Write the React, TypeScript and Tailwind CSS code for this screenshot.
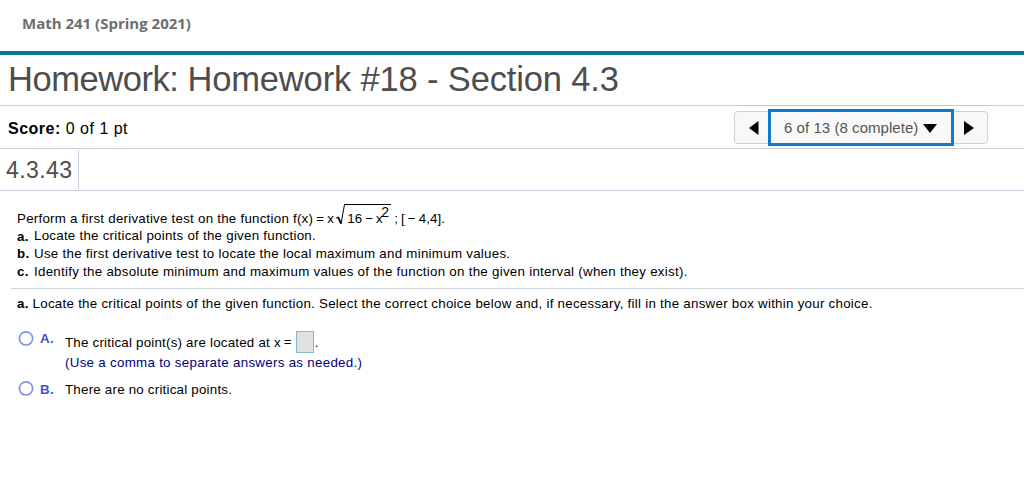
const SquareRoot = () => {
  return (
    <span className="relative ml-px h-6 w-[59px] shrink-0 -translate-y-[3px]">
      <svg
        className="absolute top-0 left-0"
        width="57"
        height="24"
        viewBox="0 0 57 24"
        fill="none"
      >
        <path d="M1 14.5 L3 13" stroke="black" strokeWidth="1" />
        <path d="M3 13 L6 19.5" stroke="black" strokeWidth="1.8" />
        <path d="M6 20 L9.5 0.5 H56" stroke="black" strokeWidth="1" />
      </svg>
      <span className="absolute top-[6px] left-[12px] flex gap-[3px] leading-[18px] tracking-[0.1px]">
        <span>16</span>
        <span>−</span>
        <span>x</span>
      </span>
      <span className="absolute -top-px left-[46px] text-[14px] leading-[18px]">2</span>
    </span>
  );
};

const Radio = () => {
  return (
    <svg width="16" height="16" viewBox="0 0 16 16" className="shrink-0">
      <circle cx="8" cy="8.4" r="6.6" fill="white" stroke="#8093e0" strokeWidth="1.7" />
    </svg>
  );
};

const Header = () => {
  return (
    <header>
      <div className="flex h-[51px] items-start pt-[13px] pl-[22px] font-['Open_Sans',sans-serif] text-[15px] leading-5 font-bold text-[#6a7070]">
        <span>Math 241 (Spring 2021)</span>
      </div>
      <div className="h-1 bg-[#007a9c]" />
      <h1 className="flex h-[51px] items-center gap-[9px] border-b border-[#c8ccd9] pl-2 text-[34.5px] text-[#4d4d4d]">
        <span className="tracking-[-0.45px]">Homework:</span>
        <span className="tracking-[-0.15px]">Homework #18 - Section 4.3</span>
      </h1>
    </header>
  );
};

const Pager = () => {
  return (
    <div className="flex h-[33px] w-[254px] rounded-[4px] border border-[#cfcfcf] bg-[#f8f8f8]">
      <button className="flex w-[33px] items-center justify-end pt-[2px] pr-[9px]">
        <svg width="10" height="14" viewBox="0 0 10 14">
          <path d="M0 7 L9.5 0 V14 Z" />
        </svg>
      </button>
      <button className="-my-[3px] flex w-[186px] items-center border-[3px] border-[#0d7acc] pl-[13px] text-[15px] tracking-[0.05px] text-[#555]">
        <span className="pt-[2px] whitespace-nowrap">6 of 13 (8 complete)</span>
        <svg className="mt-[2px] ml-[5px]" width="14" height="9" viewBox="0 0 14 9">
          <path d="M0 0 H14 L7 9 Z" fill="black" />
        </svg>
      </button>
      <button className="flex flex-1 items-center pt-[2px] pl-[10px]">
        <svg width="10" height="14" viewBox="0 0 10 14">
          <path d="M0 0 L10 7 L0 14 Z" />
        </svg>
      </button>
    </div>
  );
};

const Question = () => {
  return (
    <section className="pl-[17px] text-[13.33px] leading-[18px] tracking-[0.27px] whitespace-nowrap">
      <div className="flex h-[18px] items-center pt-px">
        <span className="tracking-[0.24px]">
          Perform a first derivative test on the function f(x)
        </span>
        <span className="ml-[3px]">=</span>
        <span className="ml-[3px]">x</span>
        <SquareRoot />
        <span className="tracking-normal">;</span>
        <span className="ml-[3px] tracking-normal">[</span>
        <span className="ml-[3px]">−</span>
        <span className="ml-[3px] tracking-[0.1px]">4,4].</span>
      </div>
      <div className="flex h-[18px]">
        <b className="w-[17px] pt-px">a.</b>
        <span className="tracking-[0.25px]">
          Locate the critical points of the given function.
        </span>
      </div>
      <div className="flex h-[18px]">
        <b className="w-[17px]">b.</b>
        <span>Use the first derivative test to locate the local maximum and minimum values.</span>
      </div>
      <div className="flex h-[18px]">
        <b className="w-[17px]">c.</b>
        <span>
          Identify the absolute minimum and maximum values of the function on the given interval
          (when they exist).
        </span>
      </div>
    </section>
  );
};

const Choices = () => {
  return (
    <section className="text-[13.33px] leading-[18px] tracking-[0.26px] whitespace-nowrap">
      <p className="pl-[17px]">
        <b>a.</b> Locate the critical points of the given function. Select the correct choice below
        and, if necessary, fill in the answer box within your choice.
      </p>
      <div className="mt-[17px] flex h-[50px] pl-[18px]">
        <Radio />
        <b className="ml-[6px] w-[25px] text-[#3c55cc]">A.</b>
        <div className="pt-px">
          <div className="flex h-[22px] items-center">
            <span className="pt-px tracking-[0.22px]">The critical point(s) are located at x</span>
            <span className="ml-[3px]">=</span>
            <span className="ml-1 h-[22px] w-[18px] border border-[#7fbccb] bg-[#e0e0e0]" />
            <span className="ml-px pt-px">.</span>
          </div>
          <div className="pt-px tracking-[0.29px] text-[#000080]">
            (Use a comma to separate answers as needed.)
          </div>
        </div>
      </div>
      <div className="flex pl-[18px]">
        <Radio />
        <b className="ml-[6px] w-[25px] pt-px text-[#3c55cc]">B.</b>
        <span className="pt-px tracking-[0.22px]">There are no critical points.</span>
      </div>
    </section>
  );
};

export default function App() {
  return (
    <main className="h-[483px] w-[1024px] overflow-hidden bg-white font-['Liberation_Sans',Arial,sans-serif] text-black">
      <Header />
      <div className="flex h-[43px] items-center justify-between border-b border-[#ccd0dc] pr-9 pl-2">
        <span className="pt-[3px] text-base tracking-[0.5px]">
          <b>Score:</b> 0 of 1 pt
        </span>
        <Pager />
      </div>
      <div className="flex h-[42px] items-start border-b border-[#c8cedb] pt-px">
        <div className="flex h-[39px] w-[79px] items-center border-r border-[#c8d0dc] pt-[2px] pl-[6px] text-[23px] tracking-[0.4px] text-[#4d4d4d]">
          4.3.43
        </div>
      </div>
      <div className="pt-[18px]">
        <Question />
      </div>
      <hr className="mt-[7px] ml-[11px] border-[#d0d6de]" />
      <div className="pt-[6px]">
        <Choices />
      </div>
    </main>
  );
}
